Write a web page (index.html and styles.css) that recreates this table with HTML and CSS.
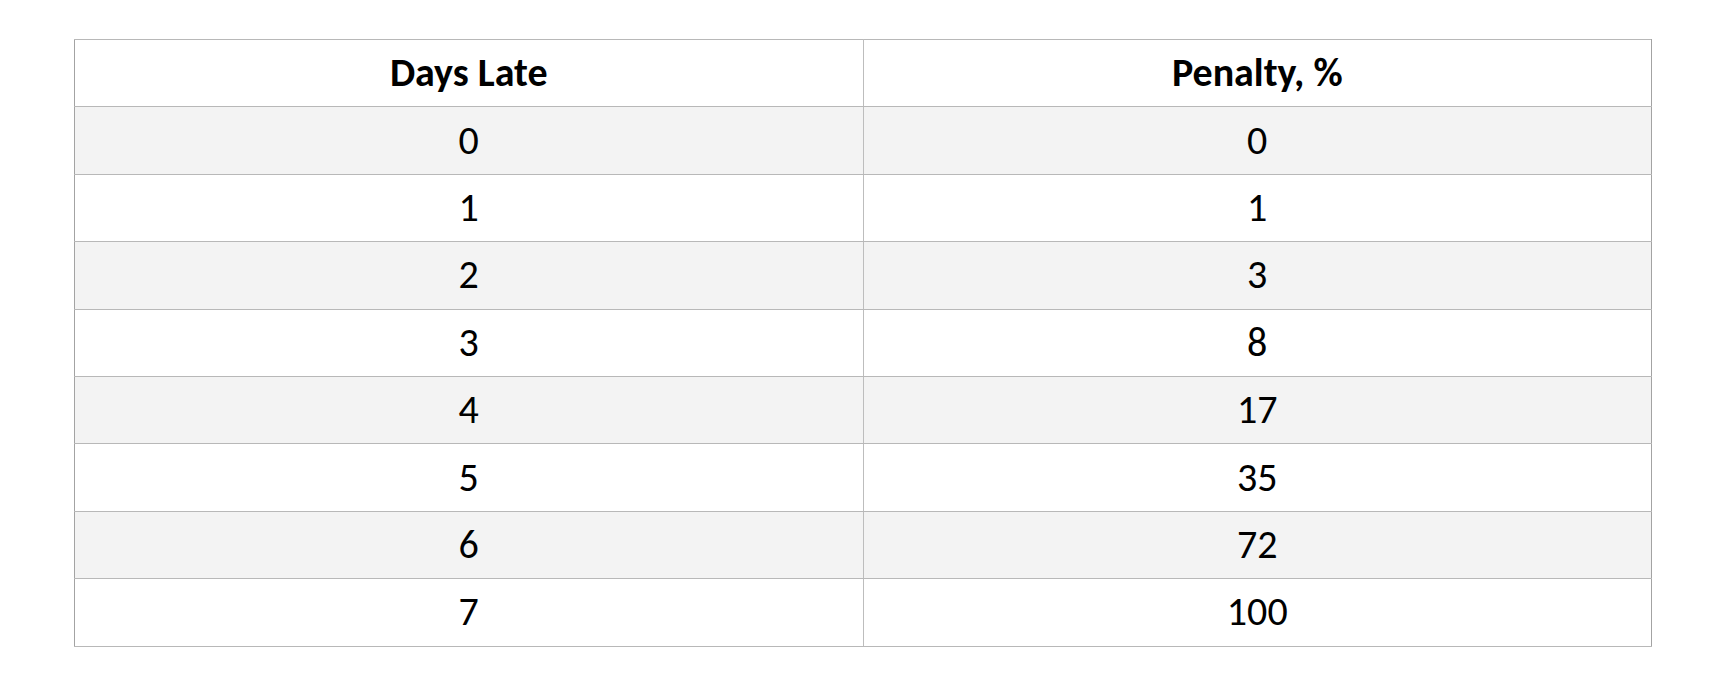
FILE: index.html
```html
<!DOCTYPE html>
<html lang="en">
<head>
<meta charset="utf-8">
<title>Late penalty</title>
<link rel="stylesheet" href="styles.css">
</head>
<body>
<div class="page">
  <table class="penalty">
    <thead>
      <tr><th>Days Late</th><th>Penalty, %</th></tr>
    </thead>
    <tbody>
      <tr class="shade"><td>0</td><td>0</td></tr>
      <tr><td>1</td><td>1</td></tr>
      <tr class="shade"><td>2</td><td>3</td></tr>
      <tr><td>3</td><td>8</td></tr>
      <tr class="shade"><td>4</td><td>17</td></tr>
      <tr><td>5</td><td>35</td></tr>
      <tr class="shade"><td>6</td><td>72</td></tr>
      <tr><td>7</td><td>100</td></tr>
    </tbody>
  </table>
</div>
</body>
</html>
```

FILE: styles.css
```css
html, body {
  margin: 0;
  padding: 0;
  background: #ffffff;
}

.page {
  padding: 39px 0 0 74px;
}

.penalty {
  border-collapse: collapse;
  width: 1578px;
  table-layout: fixed;
  font-family: "Carlito", "Calibri", "Lato", sans-serif;
  color: #000000;
  border: 1px solid #a3a3a3;
}

.penalty th,
.penalty td {
  height: 66.4px;
  padding: 0;
  text-align: center;
  vertical-align: middle;
  border-top: 1px solid #b8b8b8;
  border-bottom: 1px solid #b8b8b8;
  border-left: 1px solid #bdbdbd;
  border-right: 1px solid #bdbdbd;
  font-size: 40px;
  line-height: 1;
}

.penalty th {
  font-weight: 700;
}

.penalty td {
  font-weight: 400;
}

.penalty tr.shade td {
  background: #f3f3f3;
}

.penalty tr > :first-child {
  border-left-color: #a3a3a3;
}

.penalty tr > :last-child {
  border-right-color: #a3a3a3;
}
```
